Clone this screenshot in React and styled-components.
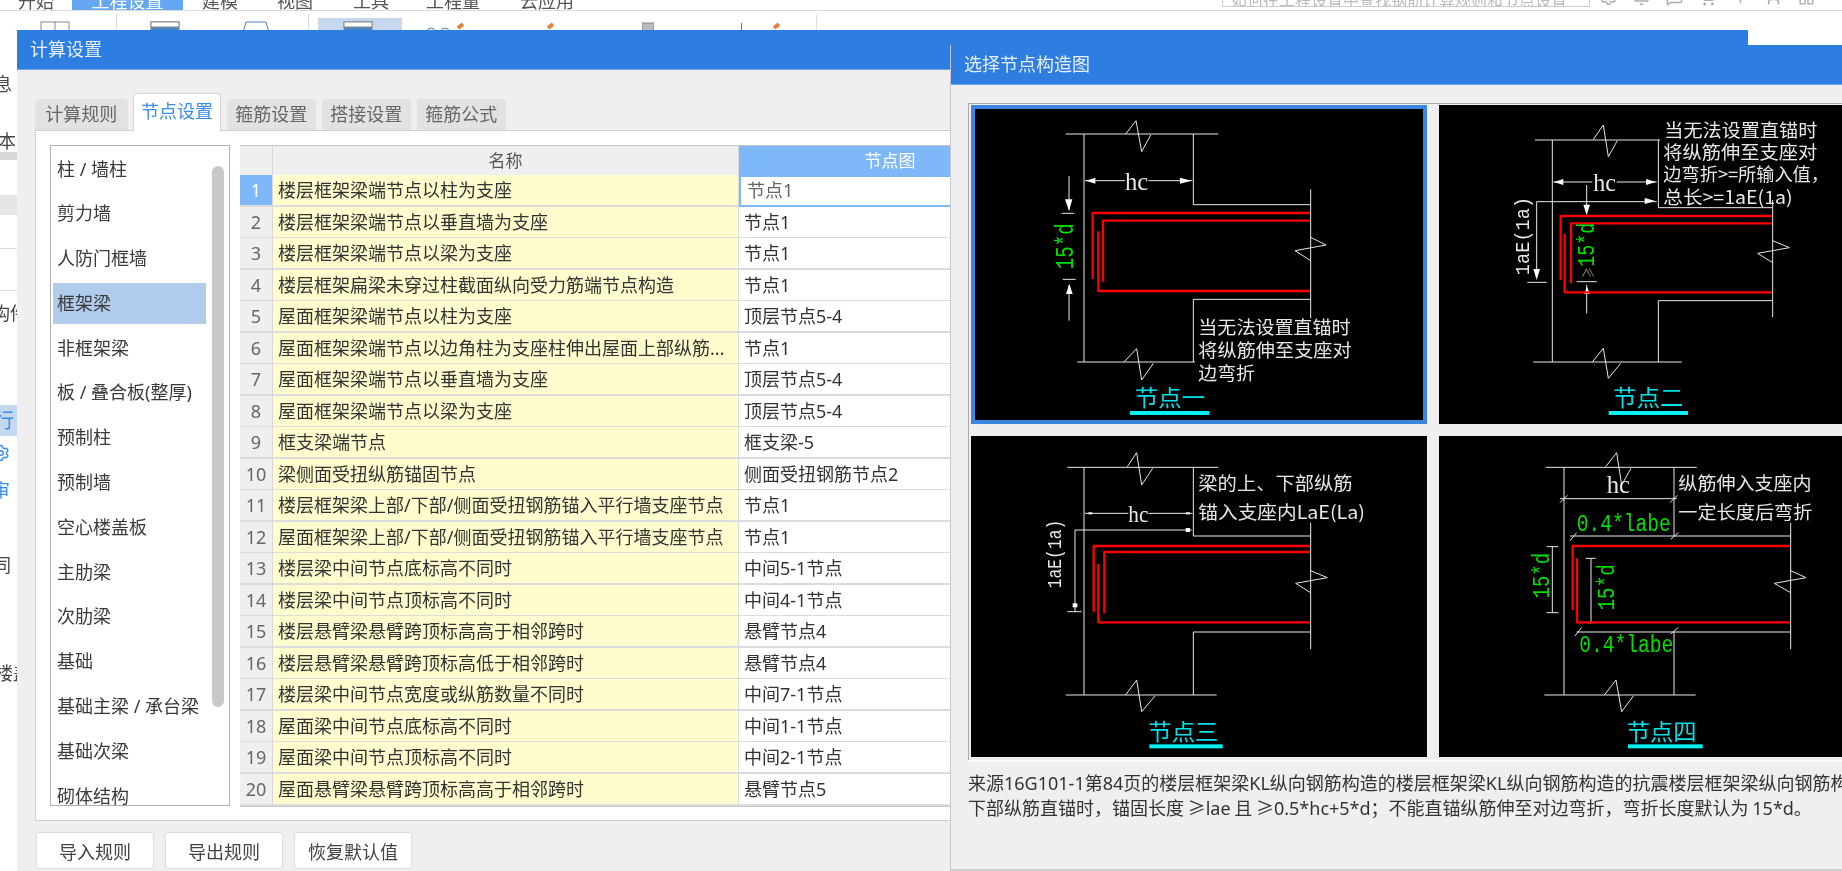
// App.jsx
import styled, { createGlobalStyle } from 'styled-components';
import { Settings, Bell, MessageSquare, ShoppingCart, ArrowUp, User, LayoutGrid } from 'lucide-react';

const UI_FONT = '"Noto Sans", "Noto Sans CJK SC", sans-serif';

const RULES = [
  ['楼层框架梁端节点以柱为支座', '节点1'],
  ['楼层框架梁端节点以垂直墙为支座', '节点1'],
  ['楼层框架梁端节点以梁为支座', '节点1'],
  ['楼层框架扁梁未穿过柱截面纵向受力筋端节点构造', '节点1'],
  ['屋面框架梁端节点以柱为支座', '顶层节点5-4'],
  ['屋面框架梁端节点以边角柱为支座柱伸出屋面上部纵筋...', '节点1'],
  ['屋面框架梁端节点以垂直墙为支座', '顶层节点5-4'],
  ['屋面框架梁端节点以梁为支座', '顶层节点5-4'],
  ['框支梁端节点', '框支梁-5'],
  ['梁侧面受扭纵筋锚固节点', '侧面受扭钢筋节点2'],
  ['楼层框架梁上部/下部/侧面受扭钢筋锚入平行墙支座节点', '节点1'],
  ['屋面框架梁上部/下部/侧面受扭钢筋锚入平行墙支座节点', '节点1'],
  ['楼层梁中间节点底标高不同时', '中间5-1节点'],
  ['楼层梁中间节点顶标高不同时', '中间4-1节点'],
  ['楼层悬臂梁悬臂跨顶标高高于相邻跨时', '悬臂节点4'],
  ['楼层悬臂梁悬臂跨顶标高低于相邻跨时', '悬臂节点4'],
  ['楼层梁中间节点宽度或纵筋数量不同时', '中间7-1节点'],
  ['屋面梁中间节点底标高不同时', '中间1-1节点'],
  ['屋面梁中间节点顶标高不同时', '中间2-1节点'],
  ['屋面悬臂梁悬臂跨顶标高高于相邻跨时', '悬臂节点5'],
];

const MEMBERS = [
  '柱 / 墙柱', '剪力墙', '人防门框墙', '框架梁', '非框架梁', '板 / 叠合板(整厚)', '预制柱', '预制墙',
  '空心楼盖板', '主肋梁', '次肋梁', '基础', '基础主梁 / 承台梁', '基础次梁', '砌体结构',
];

const TABS = ['计算规则', '节点设置', '箍筋设置', '搭接设置', '箍筋公式'];

const WHITE = '#e8e8e8';
const GREEN = '#00e000';
const CJK = '"Noto Sans CJK SC", sans-serif';
const MONO = '"Liberation Mono", monospace';
const SERIF = '"Liberation Serif", serif';

// coordinates of the drawings are 3 units per page pixel
const DRAWINGS = [
  {
    view: '45 27 1344 933', width: 448, height: 311, selected: true,
    wires: [
      '317,102 775,102', '497,102 528,62 545,155 572,105', '372,102 372,786', '700,102 700,314 1052,314',
      '1052,268 1052,655', '1052,412 1098,435 1005,452 1052,482', '700,786 700,598 1052,598', '352,786 705,786',
      '492,786 530,746 545,840 580,790', '375,242 495,242', '565,242 697,242', '327,228 327,330', '305,340 343,340',
      '308,538 347,538', '327,555 327,662',
    ],
    arrows: ['378,242 406,233 406,251', '694,242 660,233 660,251', '315,298 337,298 327,332', '318,582 338,582 328,552'],
    bars: ['1050,339 398,339 398,537', '1050,362 429,362 429,545', '415,394 415,573 1050,573'],
    labels: [
      { x: 495, y: 243, w: 70, size: 74, font: SERIF, text: 'hc' },
      { x: 320, y: 439, w: 138, size: 76, font: MONO, color: GREEN, rot: true, text: '15*d' },
      { x: 715, y: 678, w: 457, size: 54, text: '当无法设置直锚时' },
      { x: 715, y: 747, w: 460, size: 54, text: '将纵筋伸至支座对' },
      { x: 715, y: 817, w: 170, size: 54, text: '边弯折' },
    ],
    title: { x: 525, y: 888, w: 210, text: '节点一' },
    rule: { x: 510, y: 933, w: 238 },
  },
  {
    view: '27 15 1368 957', width: 456, height: 319,
    wires: [
      '315,120 690,120', '490,118 520,75 535,170 562,122', '367,120 367,786', '685,120 685,323 1028,323',
      '1028,300 1028,652', '1028,422 1078,443 983,460 1028,488', '685,786 685,602 1028,602', '310,786 755,786',
      '487,786 520,745 535,835 572,790', '370,246 487,246', '560,246 680,246', '680,305 320,305 320,530',
      '292,547 350,547', '470,255 470,340', '440,545 500,545', '470,555 470,640',
    ],
    arrows: [
      '372,246 400,237 400,255', '678,246 648,237 648,255', '676,303 644,294 644,312', '310,507 330,507 320,540',
      '460,314 480,314 470,346', '462,582 480,582 471,560',
    ],
    bars: ['1026,348 392,348 392,540', '1026,370 423,370 423,550', '404,402 404,577 1026,577'],
    labels: [
      { x: 490, y: 248, w: 68, size: 74, font: SERIF, text: 'hc' },
      { x: 280, y: 408, w: 235, size: 62, font: MONO, rot: true, text: '1aE(1a)' },
      { x: 475, y: 434, w: 132, size: 70, font: MONO, color: GREEN, rot: true, text: '15*d' },
      { x: 472, y: 518, w: 34, size: 44, color: '#8a7a50', rot: true, text: '≥' },
      { x: 703, y: 88, w: 459, size: 54, text: '当无法设置直锚时' },
      { x: 700, y: 152, w: 462, size: 54, text: '将纵筋伸至支座对' },
      { x: 700, y: 218, w: 497, size: 54, text: '边弯折>=所输入值，' },
      { x: 700, y: 288, w: 388, size: 54, text: '总长>=1aE(1a)' },
    ],
    title: { x: 550, y: 888, w: 210, text: '节点二' },
    rule: { x: 536, y: 933, w: 238 },
  },
  {
    view: '33 18 1368 963', width: 456, height: 321,
    wires: [
      '322,112 775,112', '502,110 530,68 545,165 578,115', '372,112 372,795', '700,112 700,318 1052,318',
      '1052,278 1052,657', '1052,422 1102,443 1007,460 1052,488', '700,795 700,606 1052,606', '317,795 770,795',
      '497,795 530,750 545,845 585,798', '375,250 505,250', '565,250 697,250', '695,300 345,300 345,545', '322,545 365,545',
    ],
    arrows: [
      '385,247 397,247 397,253 385,253', '677,247 690,247 690,253 677,253', '677,294 690,294 690,306 677,306',
      '338,520 352,520 352,532 338,532',
    ],
    bars: ['1050,348 401,348 401,545', '1050,366 433,366 433,550', '415,402 415,577 1050,577'],
    labels: [
      { x: 505, y: 252, w: 60, size: 70, font: SERIF, text: 'hc' },
      { x: 285, y: 372, w: 205, size: 60, font: MONO, rot: true, text: '1aE(1a)' },
      { x: 715, y: 155, w: 463, size: 54, text: '梁的上、下部纵筋' },
      { x: 715, y: 242, w: 500, size: 54, text: '锚入支座内LaE(La)' },
    ],
    title: { x: 565, y: 902, w: 210, text: '节点三' },
    rule: { x: 568, y: 943, w: 220 },
  },
  {
    view: '27 18 1368 963', width: 456, height: 321,
    wires: [
      '347,112 800,112', '527,110 560,68 575,165 603,115', '402,112 402,795', '732,112 732,318', '420,318 1082,318',
      '1082,278 1082,657', '1082,422 1128,443 1033,460 1082,488', '440,606 1082,606', '732,606 732,795', '343,795 797,795',
      '523,795 558,750 575,845 610,798', '390,206 740,206', '390,218 412,196', '720,218 742,196', '420,332 440,308',
      '722,328 745,308', '435,618 455,592', '722,612 745,592', '367,350 367,548', '350,350 385,350', '350,548 385,548',
      '483,385 483,580', '467,385 497,385', '470,578 497,578',
    ],
    arrows: [],
    bars: ['1080,348 428,348 428,540', '441,385 441,577 1080,577'],
    labels: [
      { x: 530, y: 164, w: 70, size: 74, font: SERIF, text: 'hc' },
      { x: 440, y: 283, w: 282, size: 74, font: MONO, color: GREEN, text: '0.4*labe' },
      { x: 448, y: 645, w: 282, size: 74, font: MONO, color: GREEN, text: '0.4*labe' },
      { x: 335, y: 437, w: 137, size: 74, font: MONO, color: GREEN, rot: true, text: '15*d' },
      { x: 530, y: 472, w: 139, size: 74, font: MONO, color: GREEN, rot: true, text: '15*d' },
      { x: 745, y: 157, w: 400, size: 54, text: '纵筋伸入支座内' },
      { x: 745, y: 243, w: 402, size: 54, text: '一定长度后弯折' },
    ],
    title: { x: 590, y: 902, w: 210, text: '节点四' },
    rule: { x: 594, y: 943, w: 224 },
  },
];

const GlobalStyle = createGlobalStyle`
  html, body { margin: 0; padding: 0; background: #fff; overflow: hidden; }
  * { box-sizing: border-box; }
`;

const Shell = styled.div`
  position: relative;
  width: 1842px;
  height: 871px;
  overflow: hidden;
  background: #fff;
  font-family: ${UI_FONT};
  color: #333;
  filter: blur(0.45px);
`;

/* the application behind the dialogs */
const MenuBar = styled.div`
  display: flex;
  height: 11px;
  overflow: hidden;
  border-bottom: 1px solid #dcdcdc;
  font-size: 18px;
`;

const MenuItem = styled.div`
  width: ${({ $w }) => $w}px;
  line-height: 2px;
  text-align: center;
  color: ${({ $active }) => ($active ? '#fff' : '#555')};
  background: ${({ $active }) => ($active ? '#64a8f2' : 'transparent')};
`;

const SearchBox = styled.div`
  width: 368px;
  height: 7px;
  margin-left: 625px;
  padding: 0 8px;
  border: 1px solid #ccc;
  border-top: 0;
  font-size: 16px;
  line-height: 0;
  color: #bbb;
  white-space: nowrap;
  overflow: hidden;
`;

const TopIcons = styled.div`
  display: flex;
  gap: 16px;
  margin: -11px 0 0 10px;
  color: #aaa;
`;

const Ribbon = styled.div`
  display: flex;
  height: 19px;
  padding-top: 3px;
  overflow: hidden;
`;

const RibbonSep = styled.div`
  width: 1px;
  height: 20px;
  margin-left: ${({ $left }) => $left}px;
  background: #ddd;
`;

const RibbonPick = styled.div`
  width: 84px;
  height: 20px;
  margin: 4px 0 0 ${({ $left }) => $left}px;
  padding: 3px 0 0 25px;
  background: #c5d8f0;
`;

const RibbonGlyph = styled.svg`
  flex: none;
  margin: 7px 0 0 ${({ $left }) => $left}px;
`;

const SideBar = styled.div`
  display: flex;
  flex-direction: column;
  width: 17px;
  overflow: hidden;
  font-size: 18px;
`;

const SideRow = styled.div`
  flex: none;
  height: ${({ $h }) => $h}px;
  margin-left: ${({ $x }) => $x || 0}px;
  line-height: ${({ $h }) => $h}px;
  white-space: nowrap;
  color: ${({ $color }) => $color || '#444'};
  background: ${({ $bg }) => $bg || 'transparent'};
`;

const SideGlyph = styled.span`
  margin-left: -6px;
  font-size: 20px;
`;

/* dialogs */
const Dialog = styled.section`
  position: absolute;
  left: ${({ $left }) => $left}px;
  top: ${({ $top }) => $top}px;
  width: ${({ $w }) => $w}px;
  height: ${({ $h }) => $h}px;
  background: #efefef;
  overflow: hidden;
`;

const TitleBar = styled.header`
  height: 40px;
  padding-left: 13px;
  background: #2e7ee1;
  border-bottom: 1px solid #6aa4ea;
  color: #e6effb;
  font-size: 18px;
  line-height: 39px;
`;

const TabRow = styled.div`
  display: flex;
  align-items: flex-end;
  gap: 5.5px;
  height: 60px;
  padding-left: 18px;
`;

const Tab = styled.div`
  position: relative;
  z-index: 1;
  width: ${({ $active }) => ($active ? 88 : 89.5)}px;
  height: ${({ $active }) => ($active ? 38 : 31)}px;
  margin-bottom: ${({ $active }) => ($active ? -1 : 0)}px;
  text-align: center;
  font-size: 18px;
  line-height: ${({ $active }) => ($active ? 34 : 31)}px;
  color: ${({ $active }) => ($active ? '#3a8ee8' : '#666')};
  background: ${({ $active }) => ($active ? '#fff' : '#e2e2e2')};
  border: ${({ $active }) => ($active ? '1px solid #d4d4d4' : 'none')};
  border-bottom: none;
  border-radius: 4px 4px 0 0;

  &:first-child {
    width: 92.5px;
  }
`;

const Pane = styled.div`
  display: flex;
  gap: 10px;
  height: 691px;
  margin-left: 18px;
  padding: 14px;
  background: #fff;
  border: 1px solid #d0d0d0;
`;

const MemberList = styled.div`
  position: relative;
  flex: none;
  width: 180px;
  height: 661px;
  padding: 2.5px 0 0 2px;
  border: 1px solid #b0b0b0;
  overflow: hidden;
`;

const Member = styled.div`
  width: 153px;
  height: 41px;
  margin-bottom: 3.8px;
  padding-left: 4px;
  font-size: 18px;
  line-height: 41px;
  white-space: nowrap;
  color: #3a3a3a;
  background: ${({ $active }) => ($active ? '#b0cbeb' : 'transparent')};
`;

const ScrollThumb = styled.div`
  position: absolute;
  left: 161px;
  top: 20px;
  width: 12px;
  height: 541px;
  border-radius: 6px;
  background: #c8c8c8;
`;

const Grid = styled.div`
  flex: none;
  width: 802px;
  height: 662px;
  border-top: 1px solid #c4c4c4;
  border-bottom: 2px solid #c8c8c8;
`;

const Row = styled.div`
  display: grid;
  grid-template-columns: 33px 466px 303px;
  height: ${({ $head }) => ($head ? 29 : 31.5)}px;
`;

const HeadCell = styled.div`
  text-align: center;
  font-size: 17px;
  line-height: 29px;
  color: ${({ $active }) => ($active ? '#fff' : '#555')};
  background: ${({ $active }) => ($active ? '#7eb8f9' : '#efefef')};
  border-right: 1px solid #d8d8d8;
  border-bottom: 2px solid #d4d4d4;
`;

const NumCell = styled.div`
  text-align: center;
  font-size: 18px;
  line-height: 30px;
  color: ${({ $active }) => ($active ? '#fff' : '#666')};
  background: ${({ $active }) => ($active ? '#7eb8f9' : '#efefef')};
  border-right: 1px solid #d8d8d8;
  border-bottom: 2px solid #dcdcdc;
`;

const NameCell = styled.div`
  padding-left: 5px;
  font-size: 18px;
  line-height: 30px;
  white-space: nowrap;
  overflow: hidden;
  background: #fffdcd;
  border-right: 1px solid #dcdcdc;
  border-bottom: 2px solid #dcdcdc;
`;

const NodeCell = styled.div`
  padding-left: 5px;
  font-size: 18px;
  line-height: 30px;
  white-space: nowrap;
  background: #fff;
  border-bottom: 2px solid #dcdcdc;
`;

const EditCell = styled(NodeCell)`
  padding-left: 6px;
  line-height: 26px;
  color: #666;
  border: 2px solid #7eb8f9;
`;

const ButtonRow = styled.div`
  display: flex;
  gap: 11px;
  padding: 11px 0 0 19px;
`;

const Button = styled.button`
  width: 118px;
  height: 37px;
  padding: 0;
  font-family: inherit;
  font-size: 18px;
  color: #444;
  background: #fff;
  border: 1px solid #ddd;
  border-radius: 3px;
`;

const RightDialog = styled(Dialog)`
  border-left: 1px solid #c4c8d0;
  border-bottom: 2px solid #ccc;
`;

const Frame = styled.div`
  display: grid;
  grid-template-columns: 456px 456px;
  grid-template-rows: 319px 321px;
  gap: 12px;
  width: 900px;
  margin: 18px 0 0 17px;
  padding: 1px 0 3px 2px;
  border-top: 1px solid #aaa;
  border-left: 1px solid #aaa;
  box-shadow: 0 2px 0 #fafafa;
`;

const Panel = styled.div`
  background: #000;
  border: ${({ $selected }) => ($selected ? '4px solid #3b86e0' : 'none')};
  line-height: 0;
`;

const Wire = styled.polyline`
  fill: none;
  stroke: ${WHITE};
  stroke-width: 3;
`;

const Rebar = styled.polyline`
  fill: none;
  stroke: #f00;
  stroke-width: 7;
  stroke-linejoin: round;
`;

const Arrow = styled.polygon`
  fill: #fff;
`;

const Label = styled.text`
  dominant-baseline: central;
  fill: ${({ $color }) => $color || WHITE};
  font-family: ${({ $font }) => $font || CJK};
  font-size: ${({ $size }) => $size}px;
`;

const NodeName = styled.text`
  dominant-baseline: central;
  fill: #00e0e8;
  font-family: ${CJK};
  font-size: 68px;
`;

const NodeRule = styled.rect`
  fill: #00f0f4;
`;

const Caption = styled.p`
  width: 880px;
  margin: 11px 0 0 17px;
  overflow: hidden;
  font-size: 18px;
  line-height: 25px;
  word-spacing: -1px;
  white-space: nowrap;
  color: #333;
`;

const Drawing = ({ data }) => (
  <Panel $selected={data.selected}>
    <svg width={data.width} height={data.height} viewBox={data.view}>
      {data.wires.map((points) => <Wire key={points} points={points} />)}
      {data.arrows.map((points) => <Arrow key={points} points={points} />)}
      {data.bars.map((points) => <Rebar key={points} points={points} />)}
      {data.labels.map((l, i) => (
        <Label
          key={i}
          x={l.x}
          y={l.y}
          textLength={l.w}
          lengthAdjust="spacingAndGlyphs"
          textAnchor={l.rot ? 'middle' : 'start'}
          transform={l.rot ? `rotate(-90 ${l.x} ${l.y})` : undefined}
          $size={l.size}
          $font={l.font}
          $color={l.color}
        >
          {l.text}
        </Label>
      ))}
      <NodeName x={data.title.x} y={data.title.y} textLength={data.title.w} lengthAdjust="spacingAndGlyphs">
        {data.title.text}
      </NodeName>
      <NodeRule x={data.rule.x} y={data.rule.y} width={data.rule.w} height={12} />
    </svg>
  </Panel>
);

const App = () => {
  return (
    <Shell>
      <GlobalStyle />

      <MenuBar>
        <MenuItem $w={72}>开始</MenuItem>
        <MenuItem $w={111} $active>工程设置</MenuItem>
        <MenuItem $w={74}>建模</MenuItem>
        <MenuItem $w={76}>视图</MenuItem>
        <MenuItem $w={76}>工具</MenuItem>
        <MenuItem $w={88}>工程量</MenuItem>
        <MenuItem $w={100}>云应用</MenuItem>
        <SearchBox>如何在工程设置中查找钢筋计算规则和节点设置</SearchBox>
        <TopIcons>
          <Settings size={17} />
          <Bell size={17} />
          <MessageSquare size={17} />
          <ShoppingCart size={17} />
          <ArrowUp size={17} />
          <User size={17} />
          <LayoutGrid size={17} />
        </TopIcons>
      </MenuBar>

      <Ribbon>
        <RibbonGlyph $left={40} width="32" height="20">
          <rect x="1" y="1" width="28" height="18" fill="#fff" stroke="#888" />
          <line x1="15" y1="1" x2="15" y2="19" stroke="#888" />
        </RibbonGlyph>
        <RibbonSep $left={44} />
        <RibbonGlyph $left={33} width="30" height="20">
          <rect x="1" y="1" width="28" height="18" fill="#4a84c8" stroke="#888" />
          <rect x="1" y="1" width="28" height="5" fill="#fff" stroke="#888" />
        </RibbonGlyph>
        <RibbonGlyph $left={60} width="32" height="20">
          <path d="M1 19 L6 1 H26 L31 19 Z" fill="#fff" stroke="#4a84c8" />
        </RibbonGlyph>
        <RibbonSep $left={36} />
        <RibbonPick $left={9}>
          <svg width="30" height="20">
            <rect x="1" y="1" width="28" height="18" fill="#4a84c8" stroke="#888" />
            <rect x="1" y="1" width="28" height="5" fill="#fff" stroke="#888" />
          </svg>
        </RibbonPick>
        <RibbonGlyph $left={23} width="44" height="20">
          <circle cx="6" cy="11" r="4" fill="none" stroke="#4a84c8" />
          <circle cx="20" cy="11" r="4" fill="none" stroke="#4a84c8" />
          <path d="M33 7 L38 3" stroke="#e8803a" strokeWidth="4" />
        </RibbonGlyph>
        <RibbonGlyph $left={76} width="12" height="20">
          <path d="M3 7 L8 3" stroke="#e8803a" strokeWidth="4" />
        </RibbonGlyph>
        <RibbonGlyph $left={85} width="12" height="20">
          <rect x="0" y="2" width="12" height="18" fill="#bbb" stroke="#888" />
        </RibbonGlyph>
        <RibbonGlyph $left={87} width="2" height="20">
          <rect x="0" y="2" width="1" height="18" fill="#4a84c8" />
        </RibbonGlyph>
        <RibbonGlyph $left={28} width="12" height="20">
          <path d="M3 7 L8 3" stroke="#e8803a" strokeWidth="4" />
        </RibbonGlyph>
        <RibbonSep $left={33} />
      </Ribbon>

      <SideBar>
        <SideRow $h={42} />
        <SideRow $h={24} $x={-6}>息</SideRow>
        <SideRow $h={34} />
        <SideRow $h={22} $x={-20}>基本</SideRow>
        <SideRow $h={8} $bg="#d8d8d8" />
        <SideRow $h={35} />
        <SideRow $h={20} $bg="#e6e6e6" />
        <SideRow $h={33} />
        <SideRow $h={1} $bg="#ddd" />
        <SideRow $h={41} />
        <SideRow $h={1} $bg="#ddd" />
        <SideRow $h={12} />
        <SideRow $h={20} $x={-8}>构件</SideRow>
        <SideRow $h={82} />
        <SideRow $h={31} $bg="#c5d8f0" $color="#3a8ee8"><SideGlyph>行</SideGlyph></SideRow>
        <SideRow $h={7} />
        <SideRow $h={24} $x={-8} $color="#3a8ee8"><Settings size={18} /></SideRow>
        <SideRow $h={10} />
        <SideRow $h={26} $x={-8} $color="#3a8ee8">审</SideRow>
        <SideRow $h={50} />
        <SideRow $h={24} $x={-7}>同</SideRow>
        <SideRow $h={84} />
        <SideRow $h={24} $x={-5}>楼盖</SideRow>
      </SideBar>

      <Dialog $left={17} $top={30} $w={1731} $h={841}>
        <TitleBar>计算设置</TitleBar>
        <TabRow>
          {TABS.map((name, i) => <Tab key={name} $active={i === 1}>{name}</Tab>)}
        </TabRow>
        <Pane>
          <MemberList>
            {MEMBERS.map((name, i) => <Member key={name} $active={i === 3}>{name}</Member>)}
            <ScrollThumb />
          </MemberList>
          <Grid>
            <Row $head>
              <HeadCell />
              <HeadCell>名称</HeadCell>
              <HeadCell $active>节点图</HeadCell>
            </Row>
            {RULES.map(([name, node], i) => (
              <Row key={name}>
                <NumCell $active={i === 0}>{i + 1}</NumCell>
                <NameCell>{name}</NameCell>
                {i === 0 ? <EditCell>{node}</EditCell> : <NodeCell>{node}</NodeCell>}
              </Row>
            ))}
          </Grid>
        </Pane>
        <ButtonRow>
          <Button>导入规则</Button>
          <Button>导出规则</Button>
          <Button>恢复默认值</Button>
        </ButtonRow>
      </Dialog>

      <RightDialog $left={950} $top={45} $w={892} $h={826}>
        <TitleBar>选择节点构造图</TitleBar>
        <Frame>
          {DRAWINGS.map((data) => <Drawing key={data.title.text} data={data} />)}
        </Frame>
        <Caption>
          来源16G101-1第84页的楼层框架梁KL纵向钢筋构造的楼层框架梁KL纵向钢筋构造的抗震楼层框架梁纵向钢筋构造<br />
          下部纵筋直锚时，锚固长度 ≥lae 且 ≥0.5*hc+5*d；不能直锚纵筋伸至对边弯折，弯折长度默认为 15*d。
        </Caption>
      </RightDialog>
    </Shell>
  );
};

export default App;
